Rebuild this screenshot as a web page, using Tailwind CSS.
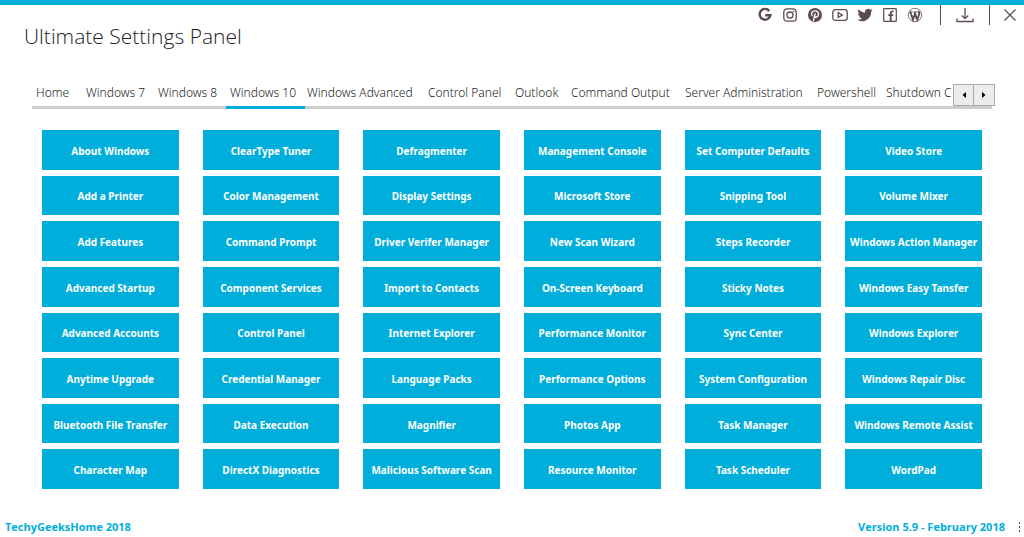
<!DOCTYPE html>
<html lang="en">
<head>
<meta charset="utf-8">
<meta name="viewport" content="width=device-width, initial-scale=1">
<title>Ultimate Settings Panel</title>
<script src="https://cdn.jsdelivr.net/npm/@tailwindcss/browser@4"></script>
</head>
<body class="flex min-h-screen flex-col border-t-5 border-[#00aedb] bg-white font-['Open_Sans','Noto_Sans',sans-serif] text-[#222]">
<header class="flex h-16 items-start justify-between pl-6">
  <h1 class="pt-[13px] text-[21px] leading-9 font-light">Ultimate Settings Panel</h1>
  <nav aria-label="Links" class="flex items-center pr-[7px] text-[#5b4b50]">
    <div class="flex h-5 items-center gap-[9px] pr-[17px]">
      <a href="#" aria-label="Google"><svg class="size-4" viewBox="0 0 16 16" fill="none" stroke="currentColor" stroke-width="2.4"><path d="M12.3 3.9A5.4 5.4 0 1 0 13.4 8.2H8.2"/></svg></a>
      <a href="#" aria-label="Instagram"><svg class="size-4" viewBox="0 0 16 16" fill="none" stroke="currentColor" stroke-width="1.3"><rect x="1.8" y="1.8" width="12.4" height="12.4" rx="3.2"/><circle cx="8" cy="8" r="3"/><circle cx="11.6" cy="4.4" r=".5" fill="currentColor" stroke-width=".6"/></svg></a>
      <a href="#" aria-label="Pinterest"><svg class="size-4" viewBox="0 0 16 16"><circle cx="8" cy="8" r="7" fill="currentColor"/><path d="M5.3 9.2C3.4 6.6 5 3.9 8.1 3.9c2.5 0 3.7 1.6 3.4 3.6-.3 2.3-2.5 3.6-4 2.1M8.2 6.3 6.4 14" fill="none" stroke="#fff" stroke-width="1.4"/></svg></a>
      <a href="#" aria-label="YouTube"><svg class="size-4" viewBox="0 0 16 16" fill="none" stroke="currentColor" stroke-width="1.3"><rect x=".8" y="2.6" width="14.4" height="10.8" rx="2.6"/><path d="M6.2 5.6v4.8L10.4 8z"/></svg></a>
      <a href="#" aria-label="Twitter"><svg class="size-4" viewBox="0 0 24 24" fill="currentColor"><path d="M23.6 4.9c-.8.4-1.7.6-2.7.8 1-.6 1.7-1.5 2-2.6-.9.5-1.9.9-3 1.1a4.7 4.7 0 0 0-8 4.3C8 8.3 4.5 6.4 2.2 3.5c-1.3 2.2-.6 4.9 1.4 6.3-.8 0-1.500-.2-2.100-.6 0 2.300 1.500 4.200 3.800 4.700-.7.200-1.400.2-2.100.1.600 1.800 2.300 3.200 4.400 3.200A9.500 9.500 0 0 1 .6 19.200 13.400 13.400 0 0 0 21.200 7.300c.9-.7 1.700-1.500 2.400-2.400z"/></svg></a>
      <a href="#" aria-label="Facebook"><svg class="size-4" viewBox="0 0 16 16" fill="none" stroke="currentColor"><rect x="1.7" y="1.7" width="12.6" height="12.6" rx=".6" stroke-width="1.2"/><path d="M8.7 14V6.2q0-2 2.8-1.7M6.3 8.2h4.9" stroke-width="1.8"/></svg></a>
      <a href="#" aria-label="WordPress"><svg class="size-4" viewBox="0 0 16 16" fill="none" stroke="currentColor"><circle cx="8" cy="8" r="6.7" stroke-width=".8"/><path d="M2.6 4.9h3.2M6.9 4.9h3.3" stroke-width=".9"/><path d="M3.3 5 6 12.6 8.300 6M7.400 5l2.800 7.600L12.300 7c.5-1.400-1-1.900-.8-3.200" stroke-width="1.9"/></svg></a>
    </div>
    <span class="h-5 w-px bg-[#5b4b50]"></span>
    <button type="button" aria-label="Download" class="mx-[15px]"><svg class="h-5 w-[18px]" viewBox="0 0 18 20" fill="none" stroke="currentColor" stroke-width="1.3"><path d="M9 3v10.500M5.800 10.500 9 13.700l3.200-3.200M1 13.500v3h16v-3"/></svg></button>
    <span class="h-5 w-px bg-[#5b4b50]"></span>
    <button type="button" aria-label="Close" class="ml-[13px]"><svg class="size-[14px]" viewBox="0 0 14 14" fill="none" stroke="currentColor" stroke-width="1.2"><path d="m1.500 1.500 11 11m0-11-11 11"/></svg></button>
  </nav>
</header>
<div class="relative mx-8 pt-3">
  <div role="tablist" class="flex h-7 overflow-hidden border-b-3 border-[#ccc] font-['Noto_Sans','Open_Sans',sans-serif] text-[12px] leading-5 font-light whitespace-nowrap text-[#222]">
    <button type="button" role="tab" class="min-w-[50px] shrink-0 px-1 pb-[2px] text-left">Home</button>
    <button type="button" role="tab" class="min-w-[72px] shrink-0 px-1 pb-[2px] text-left">Windows 7</button>
    <button type="button" role="tab" class="min-w-[72px] shrink-0 px-1 pb-[2px] text-left">Windows 8</button>
    <button type="button" role="tab" aria-selected="true" class="min-w-[77px] shrink-0 px-1 pb-[2px] text-left">Windows 10</button>
    <button type="button" role="tab" class="min-w-[121px] shrink-0 px-1 pb-[2px] text-left">Windows Advanced</button>
    <button type="button" role="tab" class="min-w-[87px] shrink-0 px-1 pb-[2px] text-left">Control Panel</button>
    <button type="button" role="tab" class="min-w-[56px] shrink-0 px-1 pb-[2px] text-left">Outlook</button>
    <button type="button" role="tab" class="min-w-[114px] shrink-0 px-1 pb-[2px] text-left">Command Output</button>
    <button type="button" role="tab" class="min-w-[132px] shrink-0 px-1 pb-[2px] text-left">Server Administration</button>
    <button type="button" role="tab" class="min-w-[69px] shrink-0 px-1 pb-[2px] text-left">Powershell</button>
    <button type="button" role="tab" class="shrink-0 px-1 pb-[2px] text-left">Shutdown C</button>
  </div>
  <span class="absolute bottom-0 left-[194px] h-[3px] w-[79px] bg-[#00aedb]"></span>
  <div class="absolute -right-[3px] bottom-[3px] flex border border-[#aaa] bg-[#ececec]">
    <button type="button" aria-label="Scroll tabs left" class="flex h-5 w-5 items-center justify-center border-r border-[#aaa]"><svg class="size-2" viewBox="0 0 8 8"><path d="M6 1v6L2.500 4z"/></svg></button>
    <button type="button" aria-label="Scroll tabs right" class="flex h-5 w-5 items-center justify-center"><svg class="size-2" viewBox="0 0 8 8"><path d="M2 1v6l3.500-3z"/></svg></button>
  </div>
</div>
<main id="panel" class="mx-[42px] mt-[21px] mb-7 grid flex-1 grid-flow-col grid-cols-6 grid-rows-8 gap-x-6 gap-y-[6px] font-['Noto_Sans','Open_Sans',sans-serif] text-[10px] font-bold text-white"></main>
<footer class="flex h-5 items-center text-[11px] leading-5 font-bold text-[#00aedb]">
  <a href="#" class="pl-[5px]">TechyGeeksHome 2018</a>
  <span class="ml-auto">Version 5.9 - February 2018</span>
  <svg class="mr-[2px] ml-3 h-3 w-[5px] text-[#5b4b50]" viewBox="0 0 5 12" fill="currentColor"><path d="M2 1h1v2H2zM2 5h1v2H2zM2 9h1v2H2z"/></svg>
</footer>
<script>
const names = [
  "About Windows","Add a Printer","Add Features","Advanced Startup","Advanced Accounts","Anytime Upgrade","Bluetooth File Transfer","Character Map",
  "ClearType Tuner","Color Management","Command Prompt","Component Services","Control Panel","Credential Manager","Data Execution","DirectX Diagnostics",
  "Defragmenter","Display Settings","Driver Verifer Manager","Import to Contacts","Internet Explorer","Language Packs","Magnifier","Malicious Software Scan",
  "Management Console","Microsoft Store","New Scan Wizard","On-Screen Keyboard","Performance Monitor","Performance Options","Photos App","Resource Monitor",
  "Set Computer Defaults","Snipping Tool","Steps Recorder","Sticky Notes","Sync Center","System Configuration","Task Manager","Task Scheduler",
  "Video Store","Volume Mixer","Windows Action Manager","Windows Easy Tansfer","Windows Explorer","Windows Repair Disc","Windows Remote Assist","WordPad"
];
const panel = document.getElementById("panel");
for (const name of names) {
  const b = document.createElement("button");
  b.type = "button";
  b.className = "whitespace-nowrap bg-[#00aedb] pt-[3px] text-center";
  b.textContent = name;
  panel.append(b);
}
</script>
</body>
</html>
